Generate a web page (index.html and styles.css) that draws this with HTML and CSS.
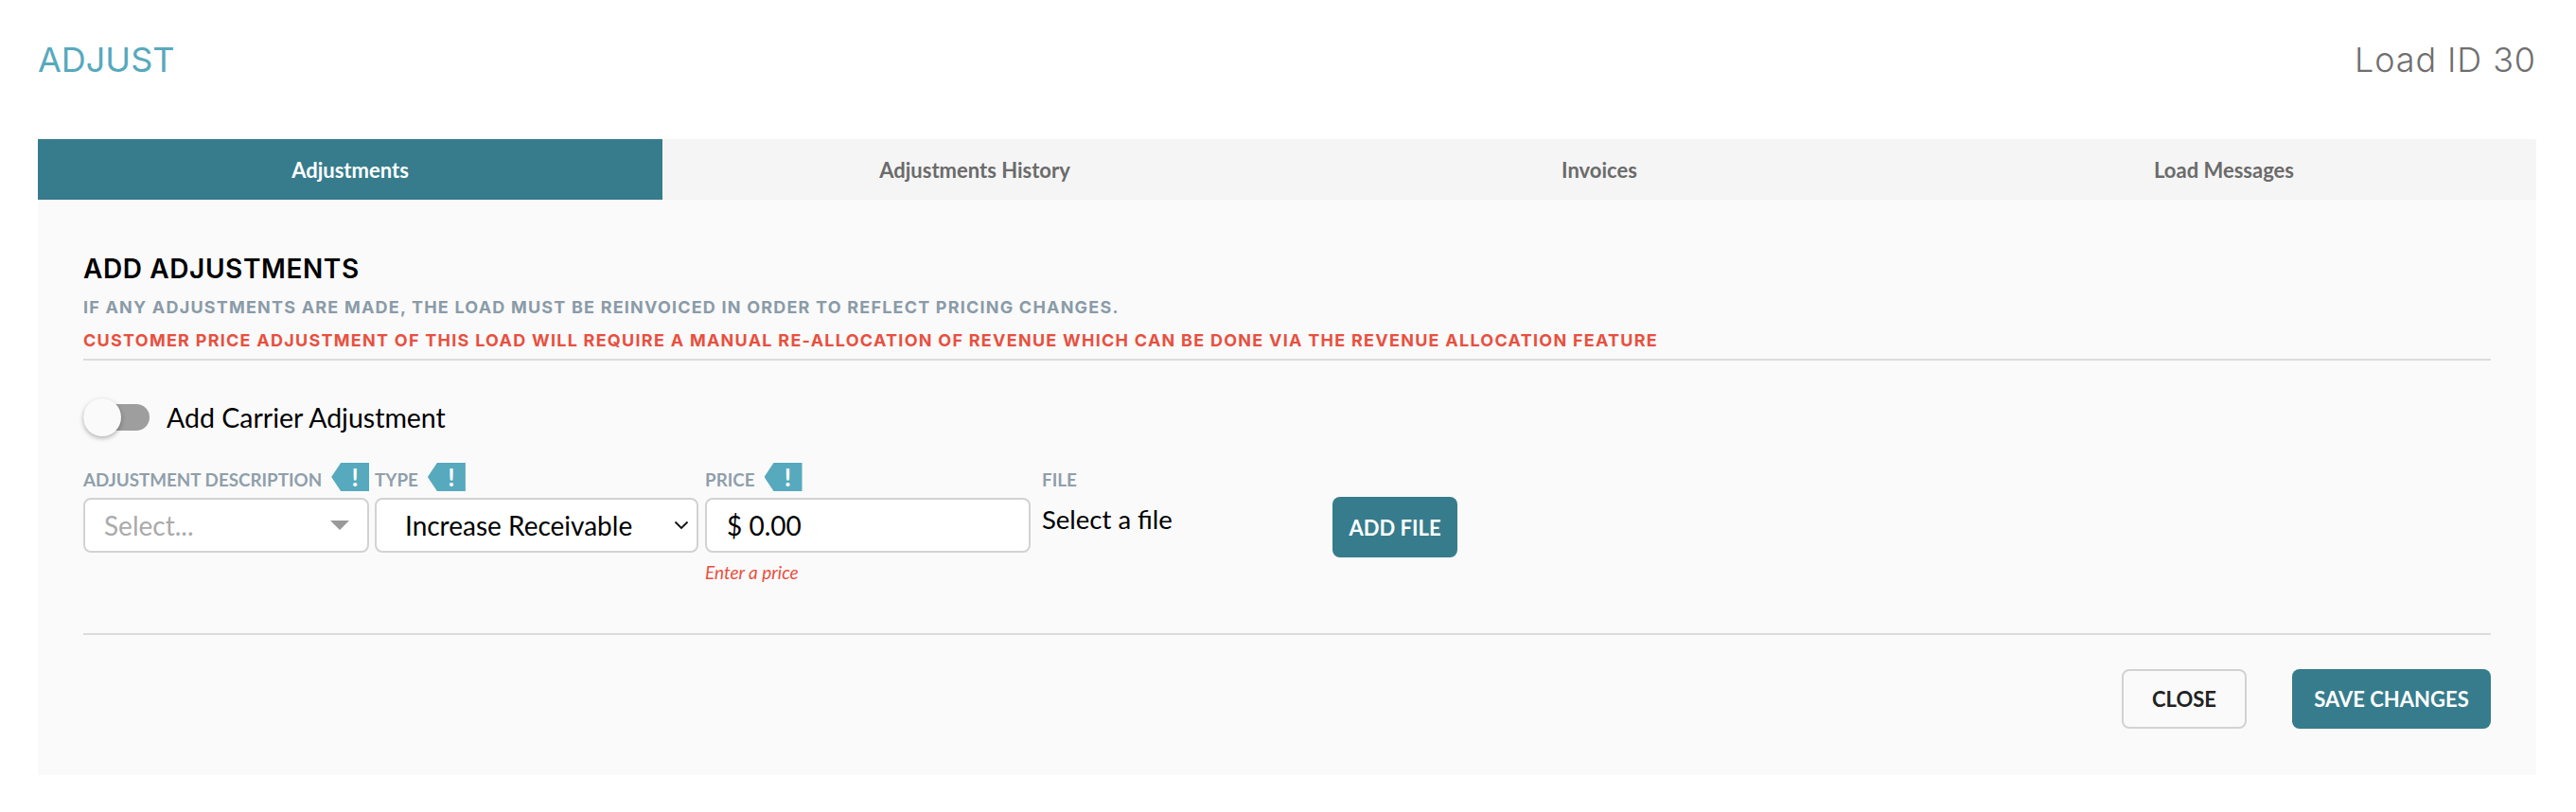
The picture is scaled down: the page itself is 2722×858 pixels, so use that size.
FILE: index.html
```html
<!DOCTYPE html>
<html lang="en">
<head>
<meta charset="utf-8">
<title>Adjust</title>
<link rel="stylesheet" href="styles.css">
</head>
<body>
<div class="page">
  <header class="top">
    <h1 class="title">ADJUST</h1>
    <div class="load-id">Load ID 30</div>
  </header>
  <nav class="tabs">
    <div class="tab active">Adjustments</div>
    <div class="tab">Adjustments History</div>
    <div class="tab">Invoices</div>
    <div class="tab">Load Messages</div>
  </nav>
  <section class="panel">
    <h2 class="heading">ADD ADJUSTMENTS</h2>
    <p class="note">IF ANY ADJUSTMENTS ARE MADE, THE LOAD MUST BE REINVOICED IN ORDER TO REFLECT PRICING CHANGES.</p>
    <p class="note warn">CUSTOMER PRICE ADJUSTMENT OF THIS LOAD WILL REQUIRE A MANUAL RE-ALLOCATION OF REVENUE WHICH CAN BE DONE VIA THE REVENUE ALLOCATION FEATURE</p>
    <hr class="rule">
    <div class="toggle-row">
      <span class="toggle"><span class="knob"></span></span>
      <span class="toggle-label">Add Carrier Adjustment</span>
    </div>
    <div class="form-row">
      <div class="field f-desc">
        <div class="label-row"><label class="label">ADJUSTMENT DESCRIPTION</label><span class="badge">!</span></div>
        <div class="control pseudo-select">
          <span class="placeholder">Select...</span>
          <svg class="caret" width="20" height="10" viewBox="0 0 20 10"><path d="M0 0H20L10 10Z" fill="#999"/></svg>
        </div>
      </div>
      <div class="field f-type">
        <div class="label-row"><label class="label">TYPE</label><span class="badge">!</span></div>
        <div class="control type-select">
          <span class="value">Increase Receivable</span>
          <svg class="chevron" width="16" height="10" viewBox="0 0 16 10"><path d="M1.5 1.5L8 8L14.5 1.5" fill="none" stroke="#111" stroke-width="1.8"/></svg>
        </div>
      </div>
      <div class="field f-price">
        <div class="label-row"><label class="label">PRICE</label><span class="badge">!</span></div>
        <div class="control price-input"><span class="value">$ 0.00</span></div>
        <div class="error">Enter a price</div>
      </div>
      <div class="field f-file">
        <div class="label-row"><label class="label">FILE</label></div>
        <div class="file-name">Select a file</div>
      </div>
      <button class="btn primary add-file">ADD FILE</button>
    </div>
    <hr class="rule rule-bottom">
    <div class="actions">
      <button class="btn ghost close">CLOSE</button>
      <button class="btn primary save">SAVE CHANGES</button>
    </div>
  </section>
</div>
</body>
</html>
```

FILE: styles.css
```css
* { box-sizing: border-box; }
html, body { margin: 0; padding: 0; background: #fff; }
body { font-family: "Lato", "Liberation Sans", sans-serif; color: #000; }
.page { padding: 0 42px 0 40px; }

.top { height: 147px; display: flex; justify-content: space-between; align-items: flex-start; padding-top: 42px; }
.title { margin: 0; font-family: "Inter", sans-serif; font-weight: 400; font-size: 36px; line-height: 42px; color: #57a9bd; }
.load-id { font-family: "Inter", sans-serif; font-weight: 300; font-size: 36px; line-height: 42px; letter-spacing: 0.9px; color: #6f6f6f; }

.tabs { display: grid; grid-template-columns: repeat(4, 1fr); height: 64px; background: #f5f5f5; }
.tab { display: flex; align-items: center; justify-content: center; font-size: 22px; font-weight: 700; color: #6b6b6b; }
.tab.active { background: #367c8c; color: #fff; }

.panel { background: #fafafa; padding: 58px 48px 49px; }
.heading { margin: 0; font-family: "Inter", sans-serif; font-weight: 600; font-size: 28px; line-height: 30px; letter-spacing: 0.6px; color: #000; }
.note { margin: 16px 0 0; font-family: "Inter", sans-serif; font-weight: 700; font-size: 18px; line-height: 20px; letter-spacing: 1.2px; color: #8a9ba8; }
.warn { margin-top: 15px; letter-spacing: 1.26px; color: #e8503f; }
.rule { border: 0; height: 2px; background: #dcdcdc; margin: 9px 0 0; }

.toggle-row { display: flex; align-items: center; height: 40px; margin-top: 40px; }
.toggle { position: relative; display: block; width: 70px; height: 28px; border-radius: 14px; background: #9e9e9e; }
.knob { position: absolute; left: 0; top: -6px; width: 40px; height: 40px; border-radius: 50%; background: #fafafa; box-shadow: 0 2px 5px rgba(0,0,0,.3); }
.toggle-label { margin-left: 18px; font-size: 28.5px; line-height: 40px; }

.form-row { display: flex; align-items: flex-start; margin-top: 28px; }
.field { display: flex; flex-direction: column; }
.f-desc { width: 302px; margin-right: 6px; }
.f-type { width: 342px; margin-right: 7px; }
.f-price { width: 344px; margin-right: 12px; }
.f-file { width: 307px; }
.label-row { display: flex; align-items: flex-start; height: 30px; margin-bottom: 7px; }
.label { flex: none; width: auto; white-space: nowrap; font-size: 18.8px; font-weight: 700; line-height: 22px; margin-top: 7px; color: #8f9fab; }
.badge { flex: none; width: 40px; height: 30px; margin-left: 10px; padding-left: 10px; background: #57a9bd; color: #fff; font-size: 26px; font-weight: 700; line-height: 30px; text-align: center; clip-path: polygon(0 50%, 10px 0, 100% 0, 100% 100%, 10px 100%); }

.control { height: 58px; border: 2px solid #d2d2d2; border-radius: 8px; background: #fff; display: flex; align-items: center; font-size: 28px; }
.pseudo-select { justify-content: space-between; padding: 0 19px 0 20px; }
.placeholder { color: #aaa; }
.type-select { justify-content: space-between; padding: 0 8px 0 30px; }
.price-input { padding-left: 21px; }
.error { margin-top: 11px; font-size: 19px; line-height: 20px; font-style: italic; color: #e8503f; }
.file-name { font-size: 27.5px; line-height: 36px; margin-top: 5px; }

.btn { border-radius: 8px; font-family: "Lato", sans-serif; font-size: 22px; font-weight: 700; cursor: pointer; }
.primary { background: #367c8c; border: 0; color: #fff; }
.ghost { background: #fafafa; border: 2px solid #d2d2d2; color: #222; }
.add-file { width: 132px; height: 64px; margin-top: 36px; padding: 0; }

.rule-bottom { margin-top: 54px; }
.actions { display: flex; justify-content: flex-end; margin-top: 36px; }
.close { width: 132px; height: 63px; margin-right: 48px; }
.save { width: 210px; height: 63px; }
```
